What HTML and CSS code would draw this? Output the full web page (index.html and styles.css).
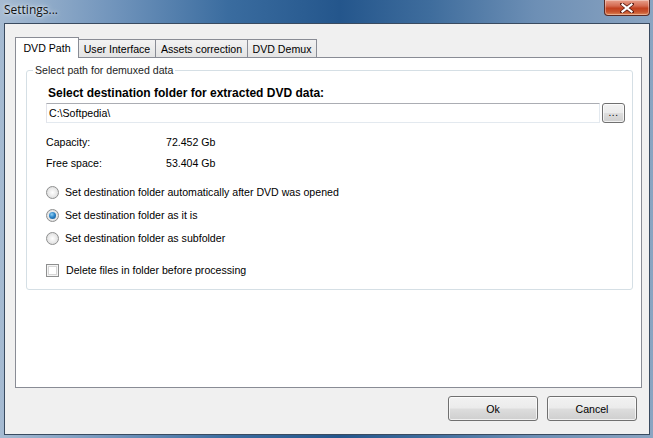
FILE: index.html
```html
<!DOCTYPE html>
<html>
<head>
<meta charset="utf-8">
<title>Settings...</title>
<link rel="stylesheet" href="styles.css">
</head>
<body>
<div class="window">
  <div class="titlebar">
    <span class="title">Settings...</span>
    <div class="close" aria-label="Close">
      <svg width="14" height="10" viewBox="0 0 14 10"><path d="M2 1 L12 9 M12 1 L2 9" stroke="#5a1a12" stroke-width="3.6" stroke-linecap="square"/><path d="M2.5 1.5 L11.5 8.5 M11.5 1.5 L2.5 8.5" stroke="#ffffff" stroke-width="2.2" stroke-linecap="square"/></svg>
    </div>
  </div>
  <div class="client">
    <div class="tabs">
      <div class="tab active w1">DVD Path</div>
      <div class="tab w2">User Interface</div>
      <div class="tab w3">Assets correction</div>
      <div class="tab w4">DVD Demux</div>
    </div>
    <div class="panel">
      <fieldset class="group">
        <legend>Select path for demuxed data</legend>
        <div class="bold-label">Select destination folder for extracted DVD data:</div>
        <div class="path-row">
          <div class="textbox">C:\Softpedia\</div>
          <div class="btn browse">...</div>
        </div>
        <div class="info">
          <span>Capacity:</span><span>72.452 Gb</span>
        </div>
        <div class="info second">
          <span>Free space:</span><span>53.404 Gb</span>
        </div>
        <div class="option first-radio"><span class="radio"></span><span>Set destination folder automatically after DVD was opened</span></div>
        <div class="option"><span class="radio checked"></span><span>Set destination folder as it is</span></div>
        <div class="option"><span class="radio"></span><span>Set destination folder as subfolder</span></div>
        <div class="option checkrow"><span class="checkbox"></span><span>Delete files in folder before processing</span></div>
      </fieldset>
    </div>
    <div class="buttons">
      <div class="btn action">Ok</div>
      <div class="btn action">Cancel</div>
    </div>
  </div>
</div>
</body>
</html>
```
FILE: styles.css
```css
* { box-sizing: border-box; }
html, body { margin: 0; padding: 0; }
body {
  width: 653px;
  height: 438px;
  overflow: hidden;
  font-family: "Liberation Sans", Arial, sans-serif;
  font-size: 10.6px;
  color: #000;
}
.window {
  width: 653px;
  height: 438px;
  display: flex;
  flex-direction: column;
  background: linear-gradient(90deg, #a6bbd2 0%, #6f93bb 18%, #3a6c9f 35%, #24568c 52%, #3f6d9d 66%, #6d8fb5 82%, #8aa4c1 100%);
}
.titlebar {
  height: 23px;
  display: flex;
  justify-content: space-between;
  align-items: flex-start;
  padding-left: 4px;
  padding-right: 3px;
}
.title {
  font-family: "Open Sans", "Liberation Sans", sans-serif;
  font-size: 12px;
  line-height: 20px;
  color: #111;
  text-shadow: 0 0 6px #dfe8f2, 0 0 3px #e8eef5;
}
.close {
  width: 46px;
  height: 16px;
  border: 1px solid #5a2a24;
  border-top: none;
  border-radius: 0 0 4px 4px;
  background: linear-gradient(#e8a08c 0%, #d46a50 40%, #c2401f 55%, #c8552e 80%, #e08a5a 100%);
  display: flex;
  align-items: center;
  justify-content: center;
  box-shadow: inset 0 0 0 1px rgba(255,255,255,0.35);
}
.client {
  margin: 0 3px 3px 4px;
  height: 412px;
  border: 1px solid #3a4b60;
  background: #f0f0f0;
  padding: 13px 0 0 10px;
  display: flex;
  flex-direction: column;
}
.tabs {
  display: flex;
  height: 20px;
  align-items: flex-end;
  position: relative;
  z-index: 1;
}
.tab {
  height: 18px;
  border: 1px solid #898c95;
  border-bottom: none;
  border-left: none;
  background: linear-gradient(#f2f2f2, #e4e4e4);
  display: flex;
  align-items: center;
  justify-content: center;
  white-space: nowrap;
}
.tab.active {
  height: 21px;
  margin-bottom: -1px;
  border-left: 1px solid #898c95;
  background: #fff;
  padding-bottom: 1px;
}
.w1 { width: 64px; }
.w2 { width: 77px; }
.w3 { width: 92px; }
.w4 { width: 69px; }
.panel {
  width: 627px;
  height: 331px;
  border: 1px solid #898c95;
  background: #fff;
  padding: 6px 0 0 10px;
}
.group {
  margin: 0;
  width: 607px;
  height: 226px;
  border: 1px solid #d5dfe5;
  border-radius: 3px;
  padding: 0 6px 0 19px;
  min-width: 0;
}
.group legend {
  margin-left: -13px;
  padding: 0 2px;
  line-height: 13px;
  color: #1e1e1e;
}
.bold-label {
  font-weight: bold;
  font-size: 12px;
  line-height: 14px;
  margin-top: 9px;
  margin-left: 2px;
  white-space: nowrap;
}
.path-row {
  display: flex;
  margin-top: 3px;
  height: 20px;
}
.textbox {
  width: 554px;
  height: 20px;
  border: 1px solid #e3e9ef;
  border-top-color: #abadb3;
  border-left-color: #e2e3ea;
  background: #fff;
  padding: 0 2px;
  line-height: 18px;
}
.btn {
  border: 1px solid #707070;
  border-radius: 3px;
  background: linear-gradient(#f2f2f2 0%, #ebebeb 48%, #dddddd 52%, #cfcfcf 100%);
  box-shadow: inset 0 0 0 1px rgba(255,255,255,0.7);
  display: flex;
  align-items: center;
  justify-content: center;
}
.browse {
  width: 23px;
  height: 20px;
  margin-left: 2px;
  font-size: 10px;
  padding-bottom: 2px;
  letter-spacing: 0.5px;
}
.info {
  display: grid;
  grid-template-columns: 120px auto;
  line-height: 14px;
  margin-top: 12px;
}
.info.second { margin-top: 7px; }
.option {
  display: flex;
  align-items: center;
  height: 16px;
  margin-top: 7px;
  white-space: nowrap;
}
.option.first-radio { margin-top: 14px; }
.option.checkrow { margin-top: 16px; }
.radio {
  width: 13px;
  height: 13px;
  border-radius: 50%;
  border: 1px solid #8e8f8f;
  background: radial-gradient(circle at 50% 50%, #ffffff 0%, #e6e6e6 60%, #d0d0d0 100%);
  margin-right: 6px;
  display: flex;
  align-items: center;
  justify-content: center;
}
.radio.checked::after {
  content: "";
  width: 7px;
  height: 7px;
  border-radius: 50%;
  background: radial-gradient(circle at 40% 35%, #8fd0f5 0%, #2f86c8 45%, #0d4f8a 100%);
}
.checkbox {
  width: 13px;
  height: 13px;
  border: 1px solid #8e8f8f;
  background: #fff;
  box-shadow: inset 0 0 0 1px #f4f4f4, inset 0 0 0 2px #d6d6d6;
  margin-right: 7px;
}
.buttons {
  display: flex;
  justify-content: flex-end;
  gap: 9px;
  margin-top: 8px;
  padding-right: 12px;
}
.action {
  width: 90px;
  height: 25px;
}
```
